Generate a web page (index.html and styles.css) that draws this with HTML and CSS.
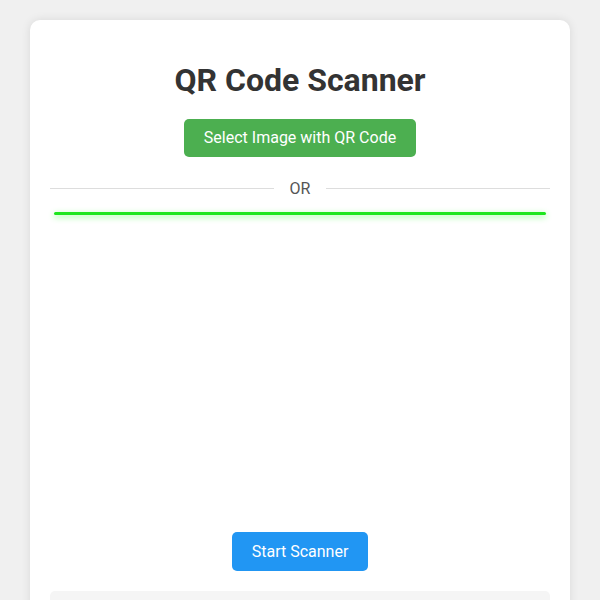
FILE: index.html
```html
<!DOCTYPE html>
<html>
<head>
<meta charset="utf-8">
<title>QR Code Scanner</title>
<link rel="stylesheet" href="styles.css">
</head>
<body>
<div class="card">
  <h1 class="title">QR Code Scanner</h1>
  <div class="center">
    <button class="btn btn-green">Select Image with QR Code</button>
  </div>
  <div class="divider"><span class="divider-line"></span><span class="divider-text">OR</span><span class="divider-line"></span></div>
  <div class="reader">
    <div class="scan-line"></div>
  </div>
  <div class="center">
    <button class="btn btn-blue">Start Scanner</button>
  </div>
  <div class="result"></div>
</div>
</body>
</html>
```
FILE: styles.css
```css
html, body {
  margin: 0;
  padding: 0;
}
body {
  background: #f0f0f0;
  font-family: Roboto, "Liberation Sans", sans-serif;
  padding: 20px;
}
.card {
  max-width: 500px;
  margin: 0 auto;
  background: #fff;
  padding: 20px;
  border-radius: 10px;
  box-shadow: 0 0 10px rgba(0, 0, 0, 0.1);
}
.title {
  text-align: center;
  font-size: 32px;
  font-weight: 700;
  color: #333;
  margin: 21px 0 19.5px;
}
.center {
  text-align: center;
}
.btn {
  font-family: inherit;
  font-size: 16px;
  line-height: 18px;
  color: #fff;
  border: none;
  border-radius: 5px;
  padding: 10px 20px;
  cursor: pointer;
}
.btn-green {
  background: #4caf50;
}
.btn-blue {
  background: #2196f3;
  margin-top: 20px;
  line-height: 19px;
}
.divider {
  display: flex;
  align-items: center;
  margin: 22px 0 14px;
  color: #555;
  font-size: 16px;
}
.divider-line {
  flex: 1;
  height: 1px;
  background: #ddd;
}
.divider-text {
  padding: 0 16px;
}
.reader {
  position: relative;
  height: 300px;
}
.scan-line {
  position: absolute;
  top: 0;
  left: 4px;
  right: 4px;
  height: 3px;
  background: #1ee61e;
  border-radius: 2px;
  box-shadow: 0 2px 6px rgba(0, 255, 0, 0.45);
}
.result {
  margin-top: 20px;
  height: 60px;
  background: #f5f5f5;
  border-radius: 5px;
}
```
